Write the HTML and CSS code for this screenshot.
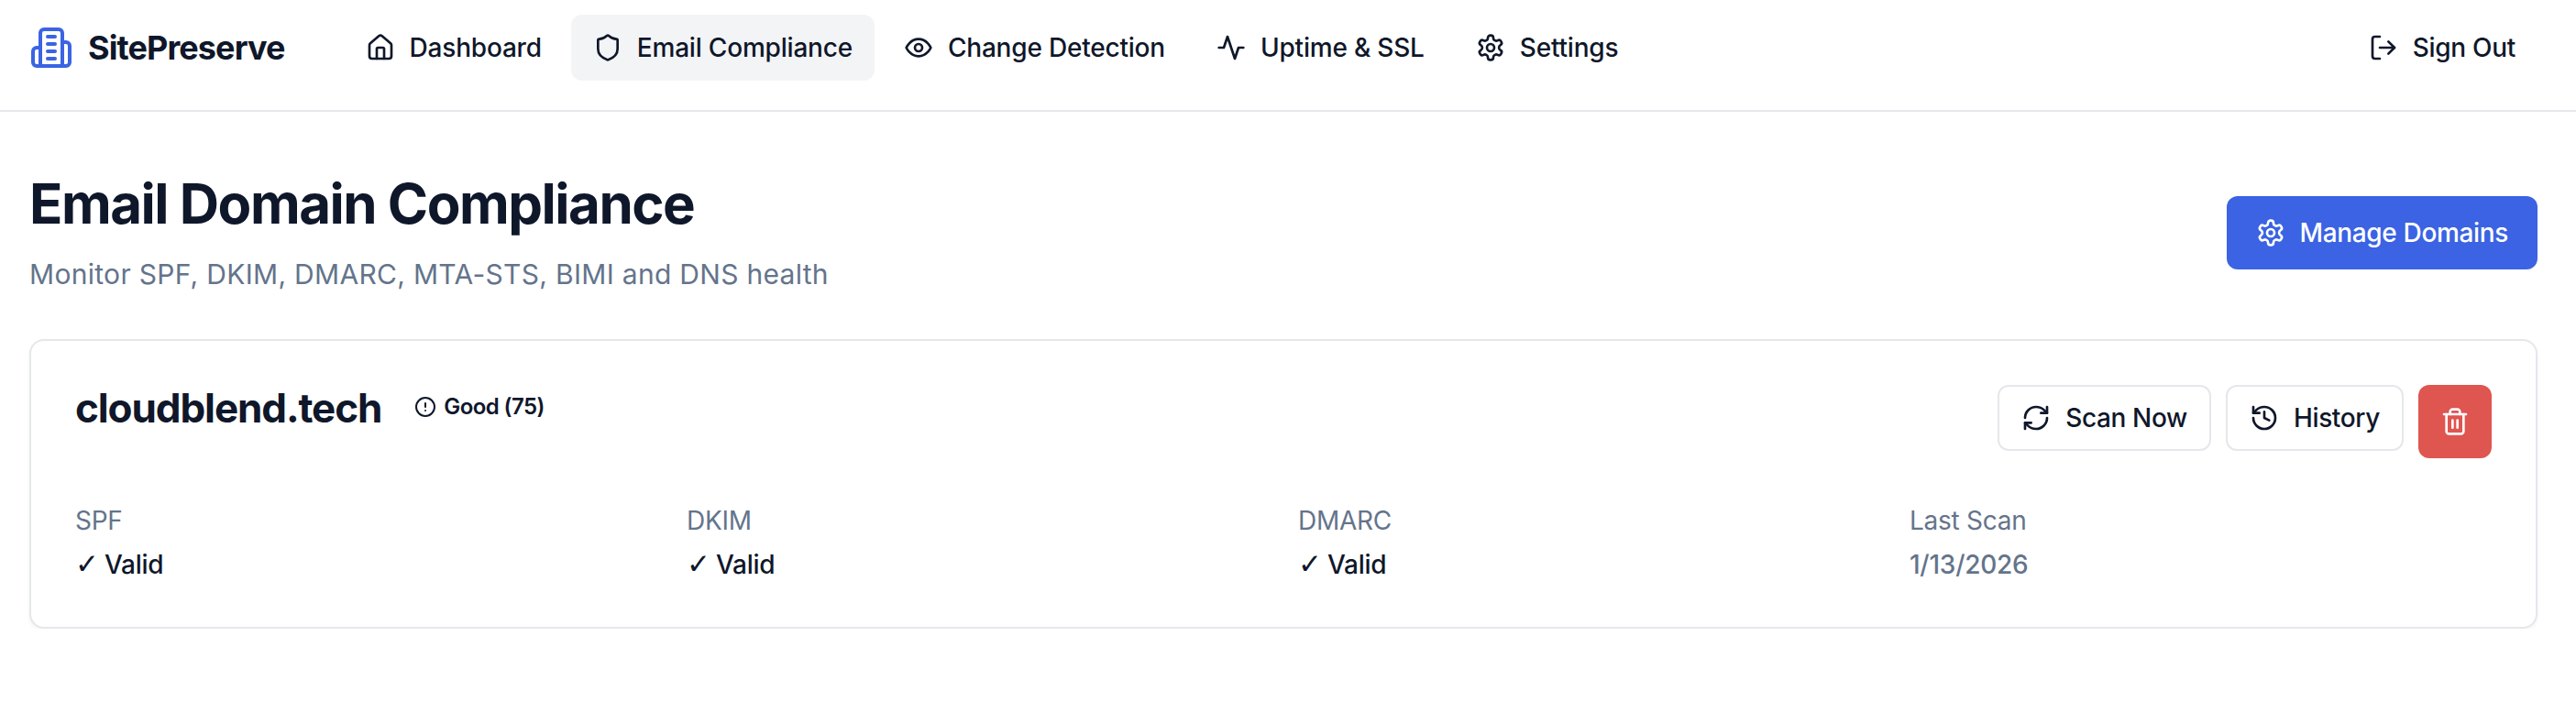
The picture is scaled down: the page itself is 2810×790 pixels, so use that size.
FILE: index.html
```html
<!DOCTYPE html>
<html lang="en">
<head>
    <meta charset="UTF-8">
    <meta name="viewport" content="width=device-width, initial-scale=1.0">
    <title>Email Domain Compliance</title>
    <link rel="stylesheet" href="styles.css">
</head>
<body>
    <!-- Top navigation -->
    <header class="navbar">
        <div class="brand">
            <svg class="brand-icon" viewBox="0 0 24 24"><path d="M6 22V4a2 2 0 0 1 2-2h8a2 2 0 0 1 2 2v18Z"/><path d="M6 12H4a2 2 0 0 0-2 2v6a2 2 0 0 0 2 2h2"/><path d="M18 9h2a2 2 0 0 1 2 2v9a2 2 0 0 1-2 2h-2"/><path d="M10 6h4"/><path d="M10 10h4"/><path d="M10 14h4"/><path d="M10 18h4"/></svg>
            <span class="brand-name">SitePreserve</span>
        </div>
        <nav class="navbar-menu">
            <a class="nav-link" href="#">
                <svg class="icon" viewBox="0 0 24 24"><path d="M15 21v-8a1 1 0 0 0-1-1h-4a1 1 0 0 0-1 1v8"/><path d="M3 10a2 2 0 0 1 .709-1.528l7-5.999a2 2 0 0 1 2.582 0l7 5.999A2 2 0 0 1 21 10v9a2 2 0 0 1-2 2H5a2 2 0 0 1-2-2z"/></svg>
                Dashboard
            </a>
            <a class="nav-link active" href="#">
                <svg class="icon" viewBox="0 0 24 24"><path d="M20 13c0 5-3.5 7.5-7.66 8.95a1 1 0 0 1-.67-.01C7.5 20.5 4 18 4 13V6a1 1 0 0 1 1-1c2 0 4.5-1.2 6.24-2.72a1.17 1.17 0 0 1 1.52 0C14.51 3.81 17 5 19 5a1 1 0 0 1 1 1z"/></svg>
                Email Compliance
            </a>
            <a class="nav-link" href="#">
                <svg class="icon" viewBox="0 0 24 24"><path d="M2 12s3-7 10-7 10 7 10 7-3 7-10 7-10-7-10-7Z"/><circle cx="12" cy="12" r="3"/></svg>
                Change Detection
            </a>
            <a class="nav-link" href="#">
                <svg class="icon" viewBox="0 0 24 24"><path d="M22 12h-4l-3 9L9 3l-3 9H2"/></svg>
                Uptime &amp; SSL
            </a>
            <a class="nav-link" href="#">
                <svg class="icon" viewBox="0 0 24 24"><path d="M12.22 2h-.44a2 2 0 0 0-2 2v.18a2 2 0 0 1-1 1.73l-.43.25a2 2 0 0 1-2 0l-.15-.08a2 2 0 0 0-2.73.73l-.22.38a2 2 0 0 0 .73 2.73l.15.1a2 2 0 0 1 1 1.72v.51a2 2 0 0 1-1 1.74l-.15.09a2 2 0 0 0-.73 2.73l.22.38a2 2 0 0 0 2.73.73l.15-.08a2 2 0 0 1 2 0l.43.25a2 2 0 0 1 1 1.73V20a2 2 0 0 0 2 2h.44a2 2 0 0 0 2-2v-.18a2 2 0 0 1 1-1.73l.43-.25a2 2 0 0 1 2 0l.15.08a2 2 0 0 0 2.73-.73l.22-.39a2 2 0 0 0-.73-2.73l-.15-.08a2 2 0 0 1-1-1.74v-.5a2 2 0 0 1 1-1.74l.15-.09a2 2 0 0 0 .73-2.73l-.22-.38a2 2 0 0 0-2.73-.73l-.15.08a2 2 0 0 1-2 0l-.43-.25a2 2 0 0 1-1-1.73V4a2 2 0 0 0-2-2z"/><circle cx="12" cy="12" r="3"/></svg>
                Settings
            </a>
        </nav>
        <a class="nav-link sign-out" href="#">
            <svg class="icon" viewBox="0 0 24 24"><path d="M9 21H5a2 2 0 0 1-2-2V5a2 2 0 0 1 2-2h4"/><polyline points="16 17 21 12 16 7"/><line x1="21" y1="12" x2="9" y2="12"/></svg>
            Sign Out
        </a>
    </header>

    <main class="page">
        <!-- Page heading -->
        <div class="page-head">
            <div>
                <h1 class="page-title">Email Domain Compliance</h1>
                <p class="page-subtitle">Monitor SPF, DKIM, DMARC, MTA-STS, BIMI and DNS health</p>
            </div>
            <button class="btn btn-primary">
                <svg class="icon" viewBox="0 0 24 24"><path d="M12.22 2h-.44a2 2 0 0 0-2 2v.18a2 2 0 0 1-1 1.73l-.43.25a2 2 0 0 1-2 0l-.15-.08a2 2 0 0 0-2.73.73l-.22.38a2 2 0 0 0 .73 2.73l.15.1a2 2 0 0 1 1 1.72v.51a2 2 0 0 1-1 1.74l-.15.09a2 2 0 0 0-.73 2.73l.22.38a2 2 0 0 0 2.73.73l.15-.08a2 2 0 0 1 2 0l.43.25a2 2 0 0 1 1 1.73V20a2 2 0 0 0 2 2h.44a2 2 0 0 0 2-2v-.18a2 2 0 0 1 1-1.73l.43-.25a2 2 0 0 1 2 0l.15.08a2 2 0 0 0 2.73-.73l.22-.39a2 2 0 0 0-.73-2.73l-.15-.08a2 2 0 0 1-1-1.74v-.5a2 2 0 0 1 1-1.74l.15-.09a2 2 0 0 0 .73-2.73l-.22-.38a2 2 0 0 0-2.73-.73l-.15.08a2 2 0 0 1-2 0l-.43-.25a2 2 0 0 1-1-1.73V4a2 2 0 0 0-2-2z"/><circle cx="12" cy="12" r="3"/></svg>
                Manage Domains
            </button>
        </div>

        <!-- Domain card -->
        <section class="domain-card">
            <div class="domain-head">
                <div class="domain-name-row">
                    <h2 class="domain-name">cloudblend.tech</h2>
                    <span class="score-badge">
                        <svg class="badge-icon" viewBox="0 0 24 24"><circle cx="12" cy="12" r="10"/><line x1="12" y1="8" x2="12" y2="12"/><line x1="12" y1="16" x2="12.01" y2="16"/></svg>
                        Good (75)
                    </span>
                </div>
                <div class="domain-actions">
                    <button class="btn btn-outline">
                        <svg class="icon" viewBox="0 0 24 24"><path d="M3 12a9 9 0 0 1 9-9 9.75 9.75 0 0 1 6.74 2.74L21 8"/><path d="M21 3v5h-5"/><path d="M21 12a9 9 0 0 1-9 9 9.75 9.75 0 0 1-6.74-2.74L3 16"/><path d="M8 16H3v5"/></svg>
                        Scan Now
                    </button>
                    <button class="btn btn-outline">
                        <svg class="icon" viewBox="0 0 24 24"><path d="M3 12a9 9 0 1 0 9-9 9.75 9.75 0 0 0-6.74 2.74L3 8"/><path d="M3 3v5h5"/><path d="M12 7v5l4 2"/></svg>
                        History
                    </button>
                    <button class="btn btn-danger" aria-label="Delete">
                        <svg class="icon" viewBox="0 0 24 24"><path d="M3 6h18"/><path d="M19 6v14c0 1-1 2-2 2H7c-1 0-2-1-2-2V6"/><path d="M8 6V4c0-1 1-2 2-2h4c1 0 2 1 2 2v2"/><line x1="10" y1="11" x2="10" y2="17"/><line x1="14" y1="11" x2="14" y2="17"/></svg>
                    </button>
                </div>
            </div>
            <div class="domain-stats">
                <div>
                    <div class="stat-label">SPF</div>
                    <div class="stat-value"><span class="check">✓</span> Valid</div>
                </div>
                <div>
                    <div class="stat-label">DKIM</div>
                    <div class="stat-value"><span class="check">✓</span> Valid</div>
                </div>
                <div>
                    <div class="stat-label">DMARC</div>
                    <div class="stat-value"><span class="check">✓</span> Valid</div>
                </div>
                <div>
                    <div class="stat-label">Last Scan</div>
                    <div class="stat-value muted">1/13/2026</div>
                </div>
            </div>
        </section>
    </main>
</body>
</html>
```

FILE: styles.css
```css
* { margin: 0; padding: 0; box-sizing: border-box; }
body { background: #fff; color: #0f172a; font-family: 'Inter', sans-serif; font-size: 28px; line-height: 40px; letter-spacing: -0.25px; }
svg { fill: none; stroke: currentColor; stroke-width: 2; stroke-linecap: round; stroke-linejoin: round; flex-shrink: 0; }
.icon { width: 32px; height: 32px; }

/* Top navigation */
.navbar { display: flex; align-items: center; height: 122px; padding: 0 42px 16px 32px; border-bottom: 2px solid #e5e7eb; }
.brand { display: flex; align-items: center; gap: 16px; margin-right: 64px; }
.brand-icon { width: 48px; height: 48px; color: #3b63e3; }
.brand-name { font-size: 36px; font-weight: 700; letter-spacing: -0.9px; }
.navbar-menu { display: flex; gap: 8px; }
.nav-link { display: flex; align-items: center; gap: 16px; height: 72px; padding: 0 24px; border-radius: 12px; color: #0f172a; text-decoration: none; font-weight: 500; letter-spacing: -0.2px; white-space: nowrap; }
.nav-link.active { background: #f3f4f6; }
.sign-out { margin-left: auto; letter-spacing: -0.3px; }

/* Page heading */
.page { padding: 60px 42px 0 32px; }
.page-head { display: flex; justify-content: space-between; align-items: center; margin-bottom: 44px; }
.page-title { font-size: 60px; line-height: 80px; font-weight: 700; letter-spacing: -1.5px; margin-bottom: 10px; }
.page-subtitle { font-size: 30px; line-height: 54px; letter-spacing: 0.3px; color: #64748b; }

/* Buttons */
.btn { display: inline-flex; align-items: center; gap: 16px; border: none; border-radius: 12px; font-family: inherit; font-size: 28px; font-weight: 500; letter-spacing: -0.35px; cursor: pointer; }
.btn-primary { height: 80px; padding: 0 32px; background: #3b63e3; color: #fff; }
.btn-outline { height: 72px; padding: 0 24px; background: #fff; border: 2px solid #e5e7eb; color: #0f172a; }
.btn-danger { width: 80px; height: 80px; justify-content: center; background: #df5550; color: #fff; }

/* Domain card */
.domain-card { padding: 48px; background: #fff; border: 2px solid #e5e7eb; border-radius: 16px; box-shadow: 0 2px 4px rgba(0,0,0,0.05); }
.domain-head { display: flex; justify-content: space-between; align-items: flex-start; margin-bottom: 48px; }
.domain-name-row { display: flex; align-items: flex-start; gap: 36px; }
.domain-name { font-size: 44px; line-height: 50px; font-weight: 700; letter-spacing: -1.1px; }
.score-badge { display: flex; align-items: center; gap: 8px; margin-top: 8px; font-size: 24px; line-height: 32px; font-weight: 600; letter-spacing: -0.6px; }
.badge-icon { width: 24px; height: 24px; }
.domain-actions { display: flex; gap: 16px; }
.domain-stats { display: grid; grid-template-columns: repeat(4, 1fr); gap: 32px; }
.stat-label { color: #64748b; margin-bottom: 8px; }
.stat-value { font-weight: 500; }
.stat-value.muted { color: #64748b; }
.check { margin-right: -1px; font-family: 'DejaVu Sans', sans-serif; font-size: 31px; line-height: 1; font-weight: 700; }
```
